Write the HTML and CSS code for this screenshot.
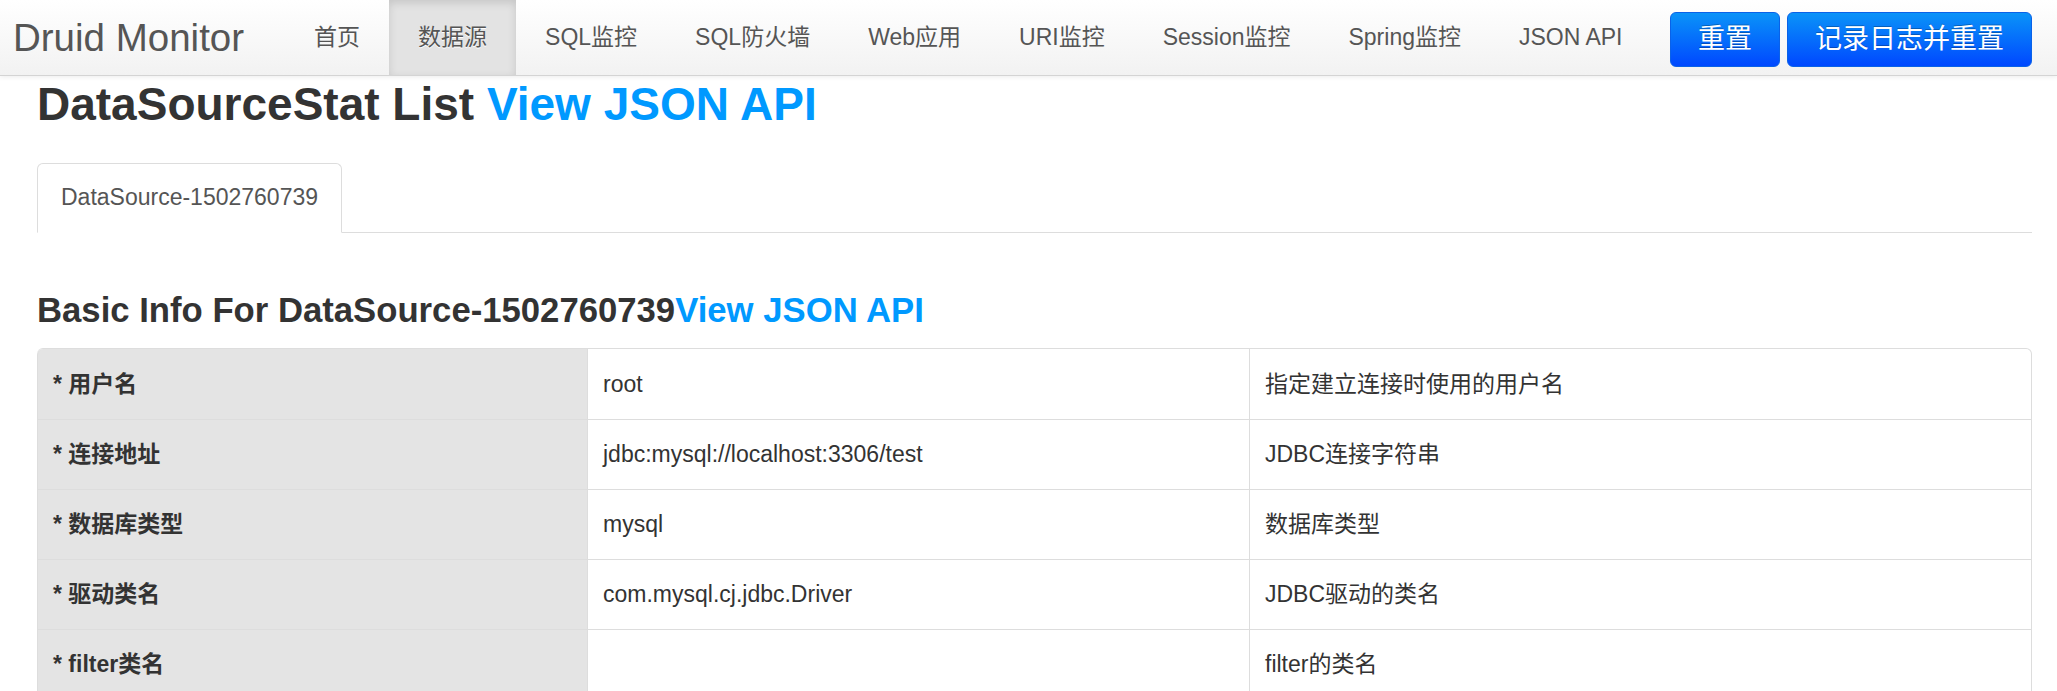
FILE: index.html
```html
<!DOCTYPE html>
<html lang="zh-CN">
<head>
<meta charset="utf-8">
<title>Druid Monitor</title>
<link rel="stylesheet" href="styles.css">
</head>
<body>
<header class="navbar">
  <a class="brand" href="#">Druid Monitor</a>
  <nav class="nav">
    <a class="nav-item" href="#">首页</a>
    <a class="nav-item active" href="#">数据源</a>
    <a class="nav-item" href="#">SQL监控</a>
    <a class="nav-item" href="#">SQL防火墙</a>
    <a class="nav-item" href="#">Web应用</a>
    <a class="nav-item" href="#">URI监控</a>
    <a class="nav-item" href="#">Session监控</a>
    <a class="nav-item" href="#">Spring监控</a>
    <a class="nav-item" href="#">JSON API</a>
  </nav>
  <div class="actions">
    <a class="btn" href="#">重置</a>
    <a class="btn" href="#">记录日志并重置</a>
  </div>
</header>

<main class="container">
  <h1 class="page-title">DataSourceStat List <a href="#">View JSON API</a></h1>

  <ul class="tabs">
    <li><a class="tab active" href="#">DataSource-1502760739</a></li>
  </ul>

  <h3 class="section-title">Basic Info For DataSource-1502760739<a href="#">View JSON API</a></h3>

  <table class="info-table">
    <colgroup>
      <col class="col-name">
      <col class="col-value">
      <col>
    </colgroup>
    <tbody>
      <tr><th>* 用户名</th><td>root</td><td>指定建立连接时使用的用户名</td></tr>
      <tr><th>* 连接地址</th><td>jdbc:mysql://localhost:3306/test</td><td>JDBC连接字符串</td></tr>
      <tr><th>* 数据库类型</th><td>mysql</td><td>数据库类型</td></tr>
      <tr><th>* 驱动类名</th><td>com.mysql.cj.jdbc.Driver</td><td>JDBC驱动的类名</td></tr>
      <tr><th>* filter类名</th><td></td><td>filter的类名</td></tr>
    </tbody>
  </table>
</main>
</body>
</html>
```
FILE: styles.css
```css
* { box-sizing: border-box; }

html, body {
  margin: 0;
  padding: 0;
  background: #fff;
}

body {
  font-family: "Liberation Sans", Arial, "Noto Sans CJK SC", sans-serif;
  color: #333;
  font-size: 23px;
  line-height: 27px;
  overflow: hidden;
}

a { text-decoration: none; }

/* ---------- navbar ---------- */
.navbar {
  display: flex;
  align-items: stretch;
  height: 76px;
  padding-right: 25px;
  background: linear-gradient(#ffffff, #f2f2f2);
  border-bottom: 1px solid #d4d4d4;
  box-shadow: 0 1px 5px rgba(0, 0, 0, 0.08);
}

.brand {
  display: block;
  padding: 0 41px 0 13px;
  font-size: 38.5px;
  line-height: 75px;
  color: #555;
  font-weight: normal;
}

.nav {
  display: flex;
}

.nav-item {
  display: block;
  padding: 0 29px;
  line-height: 75px;
  font-size: 23px;
  color: #555;
}

.nav-item.active {
  background: #e3e3e3;
  box-shadow: inset 0 3px 8px rgba(0, 0, 0, 0.13);
  text-shadow: 0 1px 0 #fff;
}

.actions {
  margin-left: auto;
  display: flex;
  gap: 7px;
  padding-top: 12px;
}

.btn {
  display: block;
  height: 55px;
  padding: 0 27px;
  font-size: 27px;
  line-height: 53px;
  color: #fff;
  background: linear-gradient(#0a93f8, #0048ff);
  border: 1px solid #0a62e8;
  border-radius: 6px;
  text-shadow: 0 -1px 0 rgba(0, 0, 0, 0.25);
}

/* ---------- content ---------- */
.container {
  padding: 0 25px 0 37px;
}

.page-title {
  margin: 2px 0 0;
  font-size: 46px;
  line-height: 52px;
  font-weight: bold;
  color: #333;
}

.page-title a,
.section-title a {
  color: #0099ff;
}

.tabs {
  display: flex;
  list-style: none;
  margin: 33px 0 0;
  padding: 0;
  border-bottom: 1px solid #ddd;
}

.tab {
  display: block;
  margin-bottom: -1px;
  padding: 20px 23px 21px;
  font-size: 23px;
  line-height: 27px;
  color: #555;
  background: #fff;
  border: 1px solid #ddd;
  border-bottom-color: transparent;
  border-radius: 6px 6px 0 0;
}

.section-title {
  margin: 57px 0 18px;
  font-size: 34.7px;
  line-height: 40px;
  font-weight: bold;
  color: #333;
}

/* ---------- table ---------- */
.info-table {
  width: 100%;
  table-layout: fixed;
  border-collapse: separate;
  border-spacing: 0;
  border: 1px solid #ddd;
  border-left: 0;
  border-radius: 6px;
}

.col-name { width: 550px; }
.col-value { width: 662px; }

.info-table th,
.info-table td {
  height: 70px;
  padding: 21px 15px;
  border-left: 1px solid #ddd;
  border-top: 1px solid #ddd;
  text-align: left;
  vertical-align: middle;
  font-size: 23px;
  line-height: 27px;
  color: #333;
}

.info-table tr:first-child th,
.info-table tr:first-child td {
  border-top: 0;
}

.info-table th {
  background: #e4e4e4;
  font-weight: bold;
}

.info-table tr:first-child th { border-top-left-radius: 6px; }
.info-table tr:first-child td:last-child { border-top-right-radius: 6px; }
```
